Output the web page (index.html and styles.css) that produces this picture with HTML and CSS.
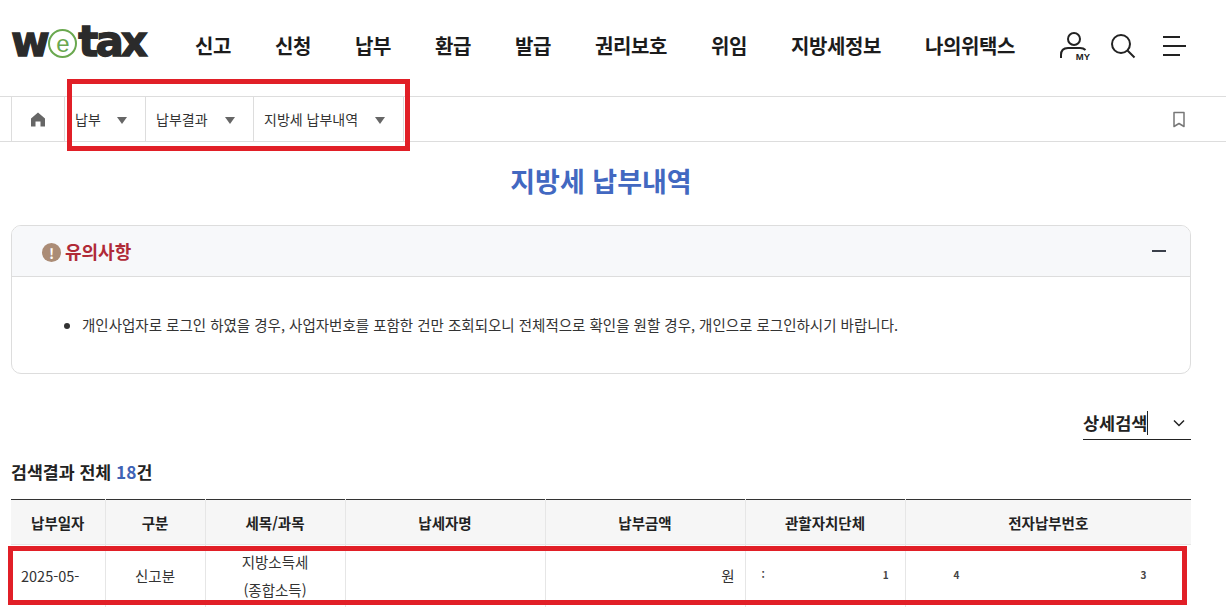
FILE: index.html
```html
<!DOCTYPE html>
<html lang="ko">
<head>
<meta charset="utf-8">
<title>지방세 납부내역</title>
<link rel="stylesheet" href="styles.css">
</head>
<body>
<header class="top">
  <div class="logo"><span>w</span><span class="logo-e">e</span><span class="logo-tax">tax</span></div>
  <nav class="gnb">
    <a>신고</a><a>신청</a><a>납부</a><a>환급</a><a>발급</a><a>권리보호</a><a>위임</a><a>지방세정보</a><a>나의위택스</a>
  </nav>
  <div class="tools">
    <div class="my">
      <svg width="30" height="32" viewBox="0 0 30 32" fill="none" stroke="#222" stroke-width="2"><circle cx="15" cy="9" r="6"/><path d="M2 28v-3c0-5 3-7 7-7h12c2 0 4 .5 5.500 2"/></svg>
      <span class="my-label">MY</span>
    </div>
    <svg class="search" width="26" height="26" viewBox="0 0 26 26" fill="none" stroke="#222" stroke-width="2"><circle cx="11" cy="11" r="9"/><path d="M17.500 17.500 24.500 24.500"/></svg>
    <div class="burger"><i class="b1"></i><i class="b2"></i><i class="b1"></i></div>
  </div>
</header>

<div class="crumbs">
  <div class="home"><svg width="16" height="15" viewBox="0 0 16 15" fill="#666"><path d="M8 .5 15 6.500V14.500H10.500V9.500H5.500V14.500H1V6.500Z"/></svg></div>
  <div class="crumb c1">납부<b class="tri"></b></div>
  <div class="crumb c2">납부결과<b class="tri"></b></div>
  <div class="crumb c3">지방세 납부내역<b class="tri"></b></div>
  <svg class="bookmark" width="14" height="17" viewBox="0 0 14 17" fill="none" stroke="#777" stroke-width="1.500"><path d="M2 1.500h10v14l-5-3-5 3z" stroke-linejoin="round"/></svg>
</div>

<main class="content">
  <h1 class="title">지방세 납부내역</h1>

  <section class="notice">
    <div class="notice-head">
      <span class="alert">!</span><strong>유의사항</strong>
      <i class="minus"></i>
    </div>
    <ul class="notice-body">
      <li>개인사업자로 로그인 하였을 경우, 사업자번호를 포함한 건만 조회되오니 전체적으로 확인을 원할 경우, 개인으로 로그인하시기 바랍니다.</li>
    </ul>
  </section>

  <div class="filter-row">
    <div class="filter"><span class="filter-text">상세검색</span>
      <svg width="12" height="8" viewBox="0 0 12 8" fill="none" stroke="#222" stroke-width="1.500"><path d="M1 1.500 6 6.500 11 1.500"/></svg>
    </div>
  </div>

  <p class="count">검색결과 전체 <em>18</em>건</p>

  <table class="grid">
    <colgroup>
      <col class="w94"><col class="w100"><col class="w140"><col class="w200"><col class="w200"><col class="w160"><col>
    </colgroup>
    <thead>
      <tr><th>납부일자</th><th>구분</th><th>세목/과목</th><th>납세자명</th><th>납부금액</th><th>관할자치단체</th><th>전자납부번호</th></tr>
    </thead>
    <tbody>
      <tr>
        <td class="left">2025-05-</td>
        <td>신고분</td>
        <td>지방소득세<br>(종합소득)</td>
        <td></td>
        <td class="right">원</td>
        <td class="masked m1"><span>:</span><span>1</span></td>
        <td class="masked m2"><span>4</span><span>3</span></td>
      </tr>
    </tbody>
  </table>
</main>

<div class="mark mark-crumbs"></div>
<div class="mark mark-row"></div>
</body>
</html>
```

FILE: styles.css
```css
* { box-sizing: border-box; }
html, body { margin: 0; padding: 0; }
body {
  position: relative;
  width: 1229px;
  height: 608px;
  overflow: hidden;
  background: #fff;
  color: #222;
  font-family: "Noto Sans CJK KR", "Noto Sans", sans-serif;
  font-size: 14px;
}

.top {
  display: flex;
  align-items: center;
  height: 96px;
  padding-left: 11px;
}
.logo {
  display: flex;
  align-items: center;
  width: 184px;
  height: 36px;
  margin-top: -12px;
  font-family: "DejaVu Sans", sans-serif;
  font-size: 42px;
  font-weight: 700;
  letter-spacing: -2.500px;
  color: #2b2b2b;
  -webkit-text-stroke: 1.300px #2b2b2b;
  line-height: 36px;
}
.logo-tax { margin-left: -1px; letter-spacing: -3px; }
.logo-e {
  display: flex;
  align-items: center;
  justify-content: center;
  width: 29px;
  height: 29px;
  margin: 3px 2px 0 1px;
  border: 2px solid #6aa84f;
  border-radius: 50%;
  font-family: "Liberation Sans", sans-serif;
  font-size: 24px;
  font-weight: 400;
  letter-spacing: 0;
  color: #6aa84f;
  -webkit-text-stroke: 0;
}
.gnb {
  display: flex;
  gap: 44px;
  margin-top: -6px;
  font-size: 20px;
  font-weight: 700;
  color: #1c1c1c;
}
.gnb a { letter-spacing: -0.4px; }
.tools {
  display: flex;
  align-items: center;
  margin-left: 44px;
  margin-top: -5px;
}
.my { position: relative; width: 30px; height: 32px; }
.my-label {
  position: absolute;
  right: -1px;
  bottom: 0;
  background: #fff;
  padding-left: 1px;
  font-family: "Liberation Sans", sans-serif;
  font-size: 9.500px;
  font-weight: 700;
  line-height: 10px;
}
.search { margin-left: 21px; }
.burger {
  display: flex;
  flex-direction: column;
  gap: 7px;
  width: 24px;
  margin-left: 27px;
}
.burger i { display: block; height: 2px; background: #222; }
.b1 { width: 17px; }
.b2 { width: 23px; }

.crumbs {
  display: flex;
  align-items: stretch;
  width: 1226px;
  height: 46px;
  border-top: 1px solid #ddd;
  border-bottom: 1px solid #ddd;
  font-size: 14px;
  color: #333;
}
.home {
  display: flex;
  align-items: center;
  justify-content: center;
  width: 54px;
  margin-left: 11px;
  border-left: 1px solid #ddd;
  border-right: 1px solid #ddd;
}
.crumb {
  display: flex;
  align-items: center;
  justify-content: space-between;
  border-right: 1px solid #ddd;
}
.c1 { width: 81px; padding: 0 18px 0 10px; }
.c2 { width: 108px; padding: 0 18px 0 10px; }
.c3 { width: 150px; padding: 0 18px 0 10px; }
.tri {
  width: 0;
  height: 0;
  margin-top: 2px;
  border-left: 5.500px solid transparent;
  border-right: 5.500px solid transparent;
  border-top: 7px solid #666;
}
.bookmark { margin: 14px 40px 0 auto; }

.content { padding: 0 38px 0 11px; }
.title {
  margin: 0;
  height: 83px;
  padding-top: 19px;
  text-align: center;
  font-size: 27px;
  line-height: 40px;
  font-weight: 700;
  color: #4268c1;
}
.notice {
  border: 1px solid #ddd;
  border-radius: 10px;
  height: 149px;
  overflow: hidden;
}
.notice-head {
  display: flex;
  align-items: center;
  height: 51px;
  padding-left: 30px;
  padding-right: 24px;
  background: #f7f8fa;
  border-bottom: 1px solid #ddd;
}
.alert {
  display: flex;
  align-items: center;
  justify-content: center;
  width: 19px;
  height: 19px;
  margin-top: 3px;
  margin-right: 4px;
  border-radius: 50%;
  background: #ab8c76;
  color: #fff;
  font-size: 14px;
  font-weight: 700;
}
.notice-head strong {
  font-size: 18px;
  font-weight: 700;
  color: #b02a37;
}
.minus {
  display: block;
  width: 14px;
  height: 2px;
  margin-left: auto;
  background: #3a3f4a;
}
.notice-body {
  margin: 0;
  padding: 38px 0 0 70px;
  font-size: 14.500px;
  line-height: 20px;
  color: #333;
}
.filter-row {
  display: flex;
  justify-content: flex-end;
  margin-top: 35px;
}
.filter {
  display: flex;
  align-items: center;
  justify-content: space-between;
  width: 108px;
  height: 31px;
  padding-right: 6px;
  padding-bottom: 3px;
  border-bottom: 1px solid #222;
  font-size: 17.500px;
  font-weight: 700;
}
.filter-text { border-right: 1px solid #222; line-height: 24px; }
.count {
  margin: 19px 0 0;
  height: 40px;
  font-size: 17.300px;
  line-height: 26px;
  font-weight: 700;
  color: #222;
}
.count em { font-style: normal; color: #3f63b5; }

.grid {
  width: 1180px;
  table-layout: fixed;
  border-collapse: collapse;
  border-top: 1px solid #333;
  font-size: 14.500px;
}
.w94 { width: 94px; }
.w100 { width: 100px; }
.w140 { width: 140px; }
.w200 { width: 200px; }
.w160 { width: 160px; }
.grid th {
  height: 45px;
  padding: 0;
  background: #f6f6f6;
  border-left: 1px solid #e6e6e6;
  border-bottom: 1px solid #e6e6e6;
  font-size: 14.500px;
  font-weight: 700;
  color: #222;
}
.grid th:first-child, .grid td:first-child { border-left: 0; }
.grid td {
  height: 62px;
  padding: 0 10px;
  border-left: 1px solid #e6e6e6;
  text-align: center;
  line-height: 28px;
  color: #333;
}
.grid td.left { text-align: left; }
.grid td.right { text-align: right; }
.grid td.masked { font-size: 10px; font-weight: 700; color: #444; text-align: left; padding-bottom: 2px; }
.m1 span:first-child { margin-left: 6px; }
.m1 span:last-child { margin-left: 118px; }
.m2 span:first-child { margin-left: 38px; }
.m2 span:last-child { margin-left: 181px; }

.mark {
  position: absolute;
  border: 5px solid #e11f27;
  pointer-events: none;
}
.mark-crumbs { left: 67px; top: 79px; width: 343px; height: 72px; }
.mark-row { left: 8px; top: 546px; width: 1179px; height: 59px; }
```
